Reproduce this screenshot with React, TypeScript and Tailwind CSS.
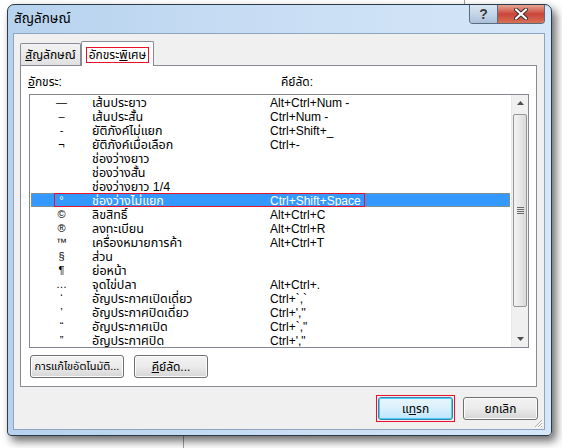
import React from "react";

const FONT = {
  fontFamily: '"Liberation Sans", Tahoma, "Noto Sans Thai", "Leelawadee UI", sans-serif',
};

type Row = { sym: string; name: React.ReactNode; key?: string; selected?: boolean };

const rows: Row[] = [
  { sym: "—", name: "เส้นประยาว", key: "Alt+Ctrl+Num -" },
  { sym: "–", name: "เส้นประสั้น", key: "Ctrl+Num -" },
  { sym: "-", name: "ยัติภังค์ไม่แยก", key: "Ctrl+Shift+_" },
  { sym: "¬", name: "ยัติภังค์เมื่อเลือก", key: "Ctrl+-" },
  { sym: "", name: "ช่องว่างยาว" },
  { sym: "", name: "ช่องว่างสั้น" },
  { sym: "", name: "ช่องว่างยาว 1/4" },
  { sym: "°", name: "ช่องว่างไม่แยก", key: "Ctrl+Shift+Space", selected: true },
  { sym: "©", name: "ลิขสิทธิ์", key: "Alt+Ctrl+C" },
  { sym: "®", name: "ลงทะเบียน", key: "Alt+Ctrl+R" },
  { sym: "™", name: "เครื่องหมายการค้า", key: "Alt+Ctrl+T" },
  { sym: "§", name: "ส่วน" },
  { sym: "¶", name: "ย่อหน้า" },
  { sym: "…", name: "จุดไข่ปลา", key: "Alt+Ctrl+." },
  { sym: "‘", name: "อัญประกาศเปิดเดี่ยว", key: "Ctrl+`,`" },
  { sym: "’", name: "อัญประกาศปิดเดี่ยว", key: "Ctrl+',''" },
  { sym: "“", name: "อัญประกาศเปิด", key: "Ctrl+`,\"" },
  { sym: "”", name: "อัญประกาศปิด", key: "Ctrl+',\"" },
];

function ListRow({ r }: { r: Row }) {
  return (
    <div
      className={
        "relative flex h-[14px] items-center text-[12px] leading-[14px] " +
        (r.selected
          ? "bg-[#3399ff] text-white outline outline-1 outline-dotted outline-[#c88a3a] -outline-offset-1"
          : "text-black")
      }
    >
      <div className="w-[61px] shrink-0 text-center text-[11px]">{r.sym}</div>
      <div className="w-[178px] shrink-0 whitespace-nowrap pt-[1px] text-[12.5px]">{r.name}</div>
      <div className="whitespace-nowrap pt-[1px]">{r.key}</div>
      {r.selected && (
        <div className="absolute left-[23px] top-0 h-[14px] w-[311px] border border-[#e8112d]" />
      )}
    </div>
  );
}

function Arrow({ up }: { up?: boolean }) {
  return (
    <svg width="7" height="4" viewBox="0 0 7 4">
      {up ? (
        <path d="M0 4 L3.5 0 L7 4 Z" fill="#4d4d4d" />
      ) : (
        <path d="M0 0 L3.5 4 L7 0 Z" fill="#4d4d4d" />
      )}
    </svg>
  );
}

function Scrollbar() {
  return (
    <div className="flex w-[17px] shrink-0 flex-col bg-[#f0f0f0] border-l border-[#e8e8e8]">
      <div className="flex h-[17px] items-center justify-center">
        <Arrow up />
      </div>
      <div className="flex-1 px-[1px] pt-[2px] pb-[24px] flex flex-col">
        <div className="flex h-[193px] items-center justify-center rounded-[2px] border border-[#959595] bg-gradient-to-r from-[#f4f4f4] via-[#e8e8e8] to-[#d9d9d9]">
          <div className="flex flex-col gap-[1px]">
            <div className="h-[1px] w-[7px] bg-[#6a6a6a]" />
            <div className="h-[1px] w-[7px] bg-[#6a6a6a]" />
            <div className="h-[1px] w-[7px] bg-[#6a6a6a]" />
            <div className="h-[1px] w-[7px] bg-[#6a6a6a]" />
          </div>
        </div>
      </div>
      <div className="flex h-[17px] items-center justify-center">
        <Arrow />
      </div>
    </div>
  );
}

function Button({
  children,
  w,
  focused,
}: {
  children: React.ReactNode;
  w: string;
  focused?: boolean;
}) {
  return (
    <div
      className={
        "flex h-[23px] items-center justify-center whitespace-nowrap rounded-[3px] border text-black " +
        w +
        " " +
        (focused
          ? "border-[#3c7fb1] bg-gradient-to-b from-[#eaf6fd] via-[#d9f0fc] to-[#bee6fd] shadow-[inset_0_0_0_1px_#48d0f7]"
          : "border-[#707070] bg-gradient-to-b from-[#f2f2f2] via-[#ebebeb] to-[#d6d6d6] shadow-[inset_0_0_0_1px_#fcfcfc]")
      }
    >
      {children}
    </div>
  );
}

export default function App() {
  return (
    <div className="relative h-[448px] w-[562px] overflow-hidden bg-white" style={FONT}>
      {/* desktop lines behind the window */}
      <div className="absolute left-[464px] top-0 h-[10px] w-[1px] bg-[#a0a0a0]" />
      <div className="absolute left-[183px] top-[430px] h-[18px] w-[1px] bg-[#a0a0a0]" />

      <div className="pl-[7px] pt-[4px]">
        <div className="relative flex h-[432px] w-[545px] flex-col rounded-t-[7px] rounded-b-[4px] border border-[#2c3a48] bg-gradient-to-r from-[#b7d2ee] via-[#c9def4] to-[#d5e7f9] shadow-[4px_5px_10px_rgba(0,0,0,0.6)]">
          {/* title bar */}
          <div className="flex h-[28px] shrink-0 items-start">
            <div className="pl-[6px] pt-[6px] text-[13.5px] leading-[16px] text-black">สัญลักษณ์</div>
            <div className="flex-1" />
            <div className="mr-[6px] flex h-[19px] overflow-hidden rounded-b-[4px] border border-t-0 border-[#5a6b7c]">
              <div className="flex w-[28px] items-center justify-center border-r border-[#5a6b7c] bg-gradient-to-b from-[#d9e5f1] via-[#c5d6e8] to-[#a9c0d9] text-[14px] font-bold leading-none text-[#3a3a3a]">
                ?
              </div>
              <div className="flex w-[46px] items-center justify-center bg-gradient-to-b from-[#e8a593] via-[#c9453a] to-[#d86f56]">
                <svg width="14" height="12" viewBox="0 0 14 12">
                  <path
                    d="M2 1.5 L12 10.5 M12 1.5 L2 10.5"
                    stroke="#3b2a2a"
                    strokeWidth="4"
                    strokeLinecap="round"
                  />
                  <path
                    d="M2 1.5 L12 10.5 M12 1.5 L2 10.5"
                    stroke="#ffffff"
                    strokeWidth="2.2"
                    strokeLinecap="round"
                  />
                </svg>
              </div>
            </div>
          </div>

          {/* client area */}
          <div className="relative mb-[5px] ml-[5px] mr-[6px] flex flex-1 flex-col border border-[#8ea5bf] bg-[#f0f0f0]">
            {/* tabs */}
            <div className="mt-[7px] flex h-[24px] items-end pl-[6px]">
              <div className="flex h-[22px] w-[61px] items-center justify-center rounded-t-[2px] border border-b-0 border-[#898c95] bg-gradient-to-b from-[#f3f3f3] to-[#e1e1e1] text-[12px] text-black">
                <span>
                  <u>สั</u>ญลักษณ์
                </span>
              </div>
              <div className="relative z-10 -mb-[1px] flex h-[25px] w-[73px] items-start justify-center rounded-t-[2px] border border-b-0 border-[#898c95] bg-white pt-[5px] text-[12px] leading-[14px] text-black">
                <span className="border border-[#e8112d] px-[2px]">
                  อักขระ<u>พิ</u>เศษ
                </span>
              </div>
            </div>

            {/* panel */}
            <div className="mr-[7px] ml-[6px] flex h-[322px] flex-col border border-[#898c95] bg-white">
              <div className="flex h-[28px] items-center pt-[3px] text-[12px] text-black">
                <div className="w-[260px] pl-[7px]">
                  <u>อั</u>กขระ:
                </div>
                <div>คีย์ลัด:</div>
              </div>
              <div className="ml-[8px] flex h-[254px] w-[500px] overflow-hidden border border-[#828790] bg-white">
                <div className="flex-1 px-[1px]">
                  {rows.map((r, i) => (
                    <ListRow key={i} r={r} />
                  ))}
                </div>
                <Scrollbar />
              </div>
              <div className="ml-[9px] mt-[7px] flex gap-[10px]">
                <Button w="w-[94px] text-[11px]">การแก้ไขอัตโนมัติ...</Button>
                <Button w="w-[74px] text-[12px]">
                  <span>
                    <u>คี</u>ย์ลัด...
                  </span>
                </Button>
              </div>
            </div>

            {/* bottom buttons */}
            <div className="mt-[10px] flex justify-end gap-[10px] pr-[6px]">
              <div className="border border-[#e8112d] p-[1px] -m-[2px]">
                <Button w="w-[75px] text-[12px]" focused>
                  <span>
                    แ<u>ท</u>รก
                  </span>
                </Button>
              </div>
              <Button w="w-[75px] text-[12px]">ยกเลิก</Button>
            </div>

            {/* size grip */}
            <svg className="absolute bottom-[1px] right-[1px]" width="10" height="10" viewBox="0 0 10 10">
              <path d="M9 2 L2 9 M9 5 L5 9 M9 8 L8 9" stroke="#b0b0b0" strokeWidth="1" />
              <path d="M10 3 L3 10 M10 6 L6 10" stroke="#ffffff" strokeWidth="1" />
            </svg>
          </div>
        </div>
      </div>
    </div>
  );
}
